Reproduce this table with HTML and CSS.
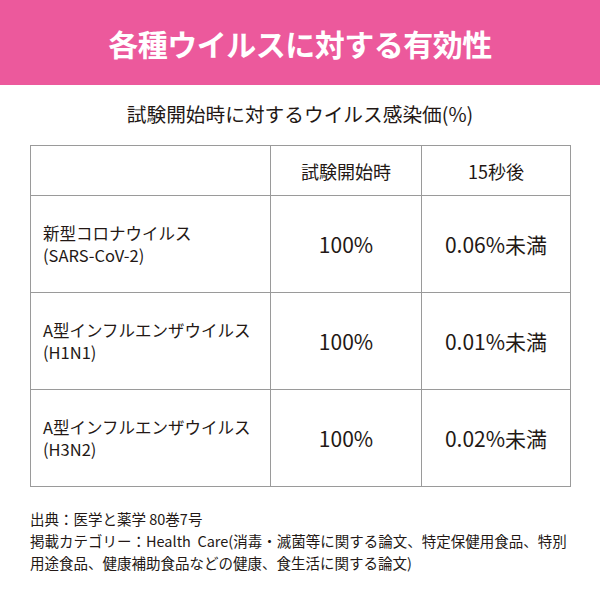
FILE: index.html
```html
<!DOCTYPE html>
<html lang="ja">
<head>
<meta charset="utf-8">
<link rel="stylesheet" href="styles.css">
</head>
<body>
<header class="banner"><h1 class="title">各種ウイルスに対する有効性</h1></header>
<p class="subtitle">試験開始時に対するウイルス感染価(%)</p>
<table class="data">
  <tr class="head">
    <th class="c1"></th>
    <th class="c2">試験開始時</th>
    <th class="c3">15秒後</th>
  </tr>
  <tr class="row">
    <td class="name">新型コロナウイルス<br>(SARS-CoV-2)</td>
    <td class="val">100%</td>
    <td class="val">0.06%未満</td>
  </tr>
  <tr class="row">
    <td class="name">A型インフルエンザウイルス<br>(H1N1)</td>
    <td class="val">100%</td>
    <td class="val">0.01%未満</td>
  </tr>
  <tr class="row">
    <td class="name">A型インフルエンザウイルス<br>(H3N2)</td>
    <td class="val">100%</td>
    <td class="val">0.02%未満</td>
  </tr>
</table>
<div class="notes">
  <p>出典：医学と薬学 80巻7号</p>
  <p>掲載カテゴリー：Health&nbsp;&nbsp;Care(消毒・滅菌等に関する論文、特定保健用食品、特別用途食品、健康補助食品などの健康、食生活に関する論文)</p>
</div>
</body>
</html>
```
FILE: styles.css
```css
html, body { margin: 0; padding: 0; background: #fff; }
body {
  width: 600px;
  font-family: "Noto Sans CJK JP", "Noto Sans", sans-serif;
  color: #231815;
}
.banner {
  background: #ec599c;
  height: 85px;
  display: flex;
  align-items: center;
  justify-content: center;
}
.title {
  margin: 0;
  color: #fff;
  font-size: 30px;
  font-weight: 700;
  letter-spacing: -0.5px;
  line-height: 1;
}
.subtitle {
  margin: 0;
  padding-top: 17px;
  height: 43px;
  text-align: center;
  font-size: 19.7px;
  line-height: 24px;
}
.data {
  margin-left: 30px;
  width: 541px;
  border-collapse: collapse;
  table-layout: fixed;
}
.data th, .data td {
  border: 1px solid #9a9a9a;
  padding: 0;
  font-weight: 400;
}
.head th { height: 49px; font-size: 18px; text-align: center; }
.c1 { width: 239px; }
.c2 { width: 150px; }
.row td { height: 96px; }
.name {
  padding-left: 12px !important;
  font-size: 16.5px;
  line-height: 22px;
}
.val {
  text-align: center;
  font-size: 21px;
}
.notes {
  padding: 21px 28px 0 30px;
  font-size: 14.5px;
  line-height: 22px;
}
.notes p { margin: 0; }
```
